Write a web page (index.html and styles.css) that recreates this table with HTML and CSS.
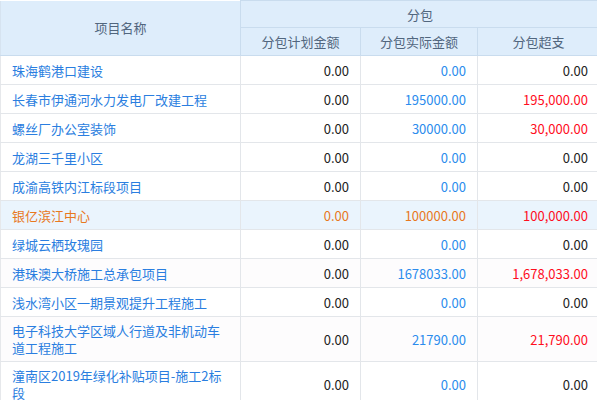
FILE: index.html
```html
<!DOCTYPE html>
<html>
<head>
<meta charset="utf-8">
<link rel="stylesheet" href="styles.css">
</head>
<body>
<table class="grid">
  <colgroup>
    <col class="c-name"><col class="c-plan"><col class="c-act"><col class="c-last">
  </colgroup>
  <thead>
    <tr class="h1">
      <th rowspan="2">项目名称</th>
      <th colspan="3">分包</th>
    </tr>
    <tr class="h2">
      <th>分包计划金额</th>
      <th>分包实际金额</th>
      <th>分包超支</th>
    </tr>
  </thead>
  <tbody>
    <tr><td class="name">珠海鹤港口建设</td><td class="n">0.00</td><td class="n act">0.00</td><td class="n">0.00</td></tr>
    <tr><td class="name">长春市伊通河水力发电厂改建工程</td><td class="n">0.00</td><td class="n act">195000.00</td><td class="n over">195,000.00</td></tr>
    <tr><td class="name">螺丝厂办公室装饰</td><td class="n">0.00</td><td class="n act">30000.00</td><td class="n over">30,000.00</td></tr>
    <tr><td class="name">龙湖三千里小区</td><td class="n">0.00</td><td class="n act">0.00</td><td class="n">0.00</td></tr>
    <tr><td class="name">成渝高铁内江标段项目</td><td class="n">0.00</td><td class="n act">0.00</td><td class="n">0.00</td></tr>
    <tr class="sel"><td class="name">银亿滨江中心</td><td class="n">0.00</td><td class="n act">100000.00</td><td class="n over">100,000.00</td></tr>
    <tr><td class="name">绿城云栖玫瑰园</td><td class="n">0.00</td><td class="n act">0.00</td><td class="n">0.00</td></tr>
    <tr class="alt"><td class="name">港珠澳大桥施工总承包项目</td><td class="n">0.00</td><td class="n act">1678033.00</td><td class="n over">1,678,033.00</td></tr>
    <tr><td class="name">浅水湾小区一期景观提升工程施工</td><td class="n">0.00</td><td class="n act">0.00</td><td class="n">0.00</td></tr>
    <tr class="alt"><td class="name">电子科技大学区域人行道及非机动车道工程施工</td><td class="n">0.00</td><td class="n act">21790.00</td><td class="n over">21,790.00</td></tr>
    <tr><td class="name">潼南区2019年绿化补贴项目-施工2标段</td><td class="n">0.00</td><td class="n act">0.00</td><td class="n">0.00</td></tr>
  </tbody>
</table>
</body>
</html>
```

FILE: styles.css
```css
html, body {
  margin: 0;
  padding: 0;
  background: #ffffff;
  overflow: hidden;
}
body {
  font-family: "Noto Sans CJK SC", "Noto Sans", sans-serif;
  font-size: 13px;
}
.grid {
  border-collapse: collapse;
  table-layout: fixed;
  width: 599px;
}
.c-name { width: 240px; }
.c-plan { width: 120px; }
.c-act { width: 117px; }
.c-last { width: 122px; }
.grid th {
  background: #deedfb;
  color: #51667e;
  font-weight: normal;
  border: 1px solid #c9dcee;
  padding: 0;
  line-height: 17px;
}
.h1 th { height: 26px; }
.h2 th { height: 27px; }
.grid td {
  border: 1px solid #e3e6ea;
  padding: 5px 11px 5px 9px;
  line-height: 17px;
  height: 18px;
  color: #222;
}
.grid tr:first-child th:first-child { border-top: none; border-left-color: #d6e3f0; }
.grid td:first-child { border-left-color: #e6e8eb; }
.grid td.name {
  color: #2a7ee0;
  padding-left: 11px;
  padding-right: 18px;
}
.grid td.n { text-align: right; }
.grid td.act { color: #2b8ced; }
.grid td.over { color: #ff0e1e; }
.grid td:last-child { padding-right: 11px; }
.grid tr.sel td { background: #eaf4fd; color: #e8781e; }
.grid tr.sel td.over { color: #ff0e1e; }
.grid tr.alt td { background: #fdfcfd; }
```
